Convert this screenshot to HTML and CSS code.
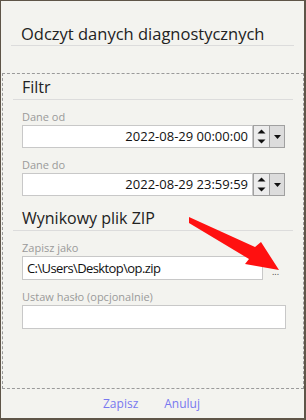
FILE: index.html
```html
<!DOCTYPE html>
<html lang="pl">
<head>
    <meta charset="UTF-8">
    <title>Odczyt danych diagnostycznych</title>
    <link rel="stylesheet" href="styles.css">
</head>
<body>
    <div class="window">
        <div class="header">
            <h1>Odczyt danych diagnostycznych</h1>
        </div>

        <div class="content">
            <h2>Filtr</h2>

            <label>Dane od</label>
            <div class="row">
                <div class="input date">2022-08-29 00:00:00</div>
                <div class="spin">
                    <svg width="9" height="6" viewBox="0 0 9 6"><path d="M0.5 5.5 L4.5 1.5 L8.5 5.5 Z" fill="#111"/></svg>
                    <svg width="9" height="6" viewBox="0 0 9 6"><path d="M0.5 0.5 L4.5 4.5 L8.5 0.5 Z" fill="#111"/></svg>
                </div>
                <div class="drop">
                    <svg width="7" height="4" viewBox="0 0 7 4"><path d="M0 0 L7 0 L3.5 4 Z" fill="#111"/></svg>
                </div>
            </div>

            <label>Dane do</label>
            <div class="row">
                <div class="input date">2022-08-29 23:59:59</div>
                <div class="spin">
                    <svg width="9" height="6" viewBox="0 0 9 6"><path d="M0.5 5.5 L4.5 1.5 L8.5 5.5 Z" fill="#111"/></svg>
                    <svg width="9" height="6" viewBox="0 0 9 6"><path d="M0.5 0.5 L4.5 4.5 L8.5 0.5 Z" fill="#111"/></svg>
                </div>
                <div class="drop">
                    <svg width="7" height="4" viewBox="0 0 7 4"><path d="M0 0 L7 0 L3.5 4 Z" fill="#111"/></svg>
                </div>
            </div>

            <h2 class="zip">Wynikowy plik ZIP</h2>

            <label>Zapisz jako</label>
            <div class="row">
                <div class="input path">C:\Users\Desktop\op.zip</div>
                <span class="browse">...</span>
            </div>

            <label>Ustaw hasło (opcjonalnie)</label>
            <div class="row">
                <div class="input pass"></div>
            </div>
        </div>

        <div class="footer">
            <a href="#">Zapisz</a>
            <a href="#">Anuluj</a>
        </div>

        <!-- annotation arrow over the dialog -->
        <svg class="arrow" width="306" height="420" viewBox="0 0 306 420">
            <polygon points="189,217 255,247 261,242 279,270 245,264 249,259 189,223" fill="#ff1010"/>
        </svg>
    </div>
</body>
</html>
```

FILE: styles.css
```css
* {
    box-sizing: border-box;
}

body {
    margin: 0;
    font-family: "Open Sans", "Noto Sans", sans-serif;
}

.window {
    position: relative;
    width: 306px;
    height: 420px;
    background-color: #f3f3ef;
    border: 1px solid #5e5548;
    border-right-width: 2px;
    border-bottom-width: 2px;
    display: flex;
    flex-direction: column;
}

.header {
    height: 72px;
    padding: 23px 10px 0 10px;
}

h1 {
    margin: 0;
    font-size: 16.5px;
    font-weight: normal;
    color: #222;
    padding: 0 0 1px 10px;
    line-height: 20px;
    border-bottom: 1px solid #dcdcdc;
}

.content {
    flex: 1;
    margin: 0 0 0 1px;
    border: 1px dashed #9a9a9a;
    padding: 3px 10px 0 10px;
}

h2 {
    margin: 0 0 10px 0;
    font-size: 16px;
    font-weight: normal;
    color: #222;
    padding: 0 0 2px 9px;
    line-height: 20px;
    border-bottom: 1px solid #dcdcdc;
}

h2.zip {
    margin-top: 12px;
    margin-bottom: 10px;
}

label {
    display: block;
    padding-left: 9px;
    font-size: 11px;
    color: #9a9a9a;
    line-height: 14px;
    margin-bottom: 1px;
}

.row {
    display: flex;
    align-items: center;
    padding-left: 9px;
    margin-bottom: 10px;
}

.input {
    height: 23px;
    background-color: #fff;
    border: 1px solid #c8c8c8;
    font-size: 13px;
    color: #111;
    line-height: 21px;
    padding: 0 4px;
}

.date {
    width: 231px;
    text-align: right;
}

.path {
    width: 241px;
    height: 24px;
    line-height: 22px;
    letter-spacing: -0.6px;
}

.pass {
    width: 264px;
    height: 24px;
}

.spin {
    width: 17px;
    height: 23px;
    border: 1px solid #a0a0a0;
    background-color: #ececec;
    display: flex;
    flex-direction: column;
    align-items: center;
    justify-content: space-around;
}

.drop {
    width: 15px;
    height: 23px;
    border: 1px solid #a0a0a0;
    border-left: none;
    background-color: #dcdcdc;
    display: flex;
    align-items: center;
    justify-content: center;
}

.browse {
    margin-left: 9px;
    font-size: 9px;
    color: #444;
    padding-top: 6px;
}

.footer {
    height: 29px;
    display: flex;
    justify-content: center;
    align-items: center;
    gap: 26px;
    padding-right: 2px;
}

.footer a {
    font-size: 12px;
    color: #7878f0;
    text-decoration: none;
}

.arrow {
    position: absolute;
    left: -1px;
    top: -1px;
    pointer-events: none;
}
```
